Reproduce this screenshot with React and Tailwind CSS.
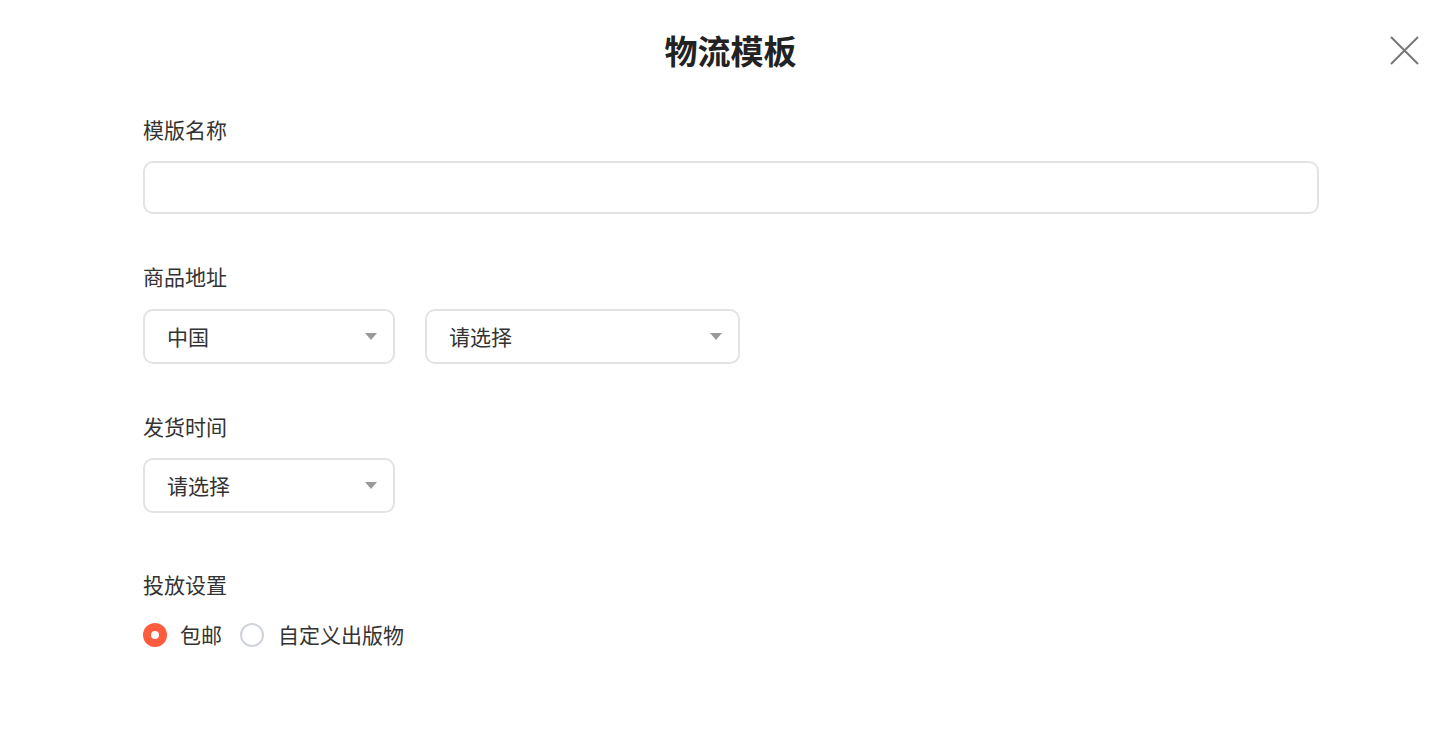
import React, { useState } from 'react';

const font = { fontFamily: '"Noto Sans CJK SC", "Noto Sans", sans-serif' };

const Caret = () => (
  <svg width="12" height="7" viewBox="0 0 12 7" className="shrink-0">
    <path d="M0 0 L12 0 L6 7 Z" fill="#9a9a9a" />
  </svg>
);

const Select = ({ value, width }) => (
  <div
    className={`${width} h-[55px] border-2 border-[#e3e3e3] rounded-[10px] flex items-center justify-between pl-[22px] pr-[16px] bg-white`}
  >
    <span className="text-[21px] text-[#333]">{value}</span>
    <Caret />
  </div>
);

const Label = ({ children }) => (
  <div className="text-[21px] leading-[28px] text-[#333]">{children}</div>
);

export default function App() {
  const [ship, setShip] = useState('free');

  return (
    <div className="w-full min-h-screen bg-white relative" style={font}>
      {/* Close */}
      <button className="absolute right-[36px] top-[36px] w-[29px] h-[29px]">
        <svg width="29" height="29" viewBox="0 0 29 29">
          <path d="M1 1 L28 28 M28 1 L1 28" stroke="#777" strokeWidth="2" />
        </svg>
      </button>

      <div className="pt-[26px] text-center">
        <h1 className="text-[33px] leading-[48px] font-bold text-[#222] pl-[6px]">物流模板</h1>
      </div>

      <div className="pl-[143px] w-[1319px] pt-[41px]">
        <Label>模版名称</Label>
        <div className="mt-[18px] h-[53px] w-[1176px] border-2 border-[#e3e3e3] rounded-[10px]" />

        <div className="mt-[48px]">
          <Label>商品地址</Label>
          <div className="mt-[19px] flex gap-[30px]">
            <Select value="中国" width="w-[252px]" />
            <Select value="请选择" width="w-[315px]" />
          </div>
        </div>

        <div className="mt-[48px]">
          <Label>发货时间</Label>
          <div className="mt-[18px] flex">
            <Select value="请选择" width="w-[252px]" />
          </div>
        </div>

        <div className="mt-[57px]">
          <Label>投放设置</Label>
          <div className="mt-[23px] flex items-center h-[28px]">
            <button className="flex items-center" onClick={() => setShip('free')}>
              {ship === 'free' ? (
                <span className="w-[24px] h-[24px] rounded-full bg-[#ff5b3f] flex items-center justify-center">
                  <span className="w-[8px] h-[8px] rounded-full bg-white" />
                </span>
              ) : (
                <span className="w-[24px] h-[24px] rounded-full border-2 border-[#cfd3da]" />
              )}
              <span className="ml-[13px] text-[21px] text-[#333]">包邮</span>
            </button>
            <button className="flex items-center ml-[18px]" onClick={() => setShip('custom')}>
              {ship === 'custom' ? (
                <span className="w-[24px] h-[24px] rounded-full bg-[#ff5b3f] flex items-center justify-center">
                  <span className="w-[8px] h-[8px] rounded-full bg-white" />
                </span>
              ) : (
                <span className="w-[24px] h-[24px] rounded-full border-2 border-[#cfd3da]" />
              )}
              <span className="ml-[14px] text-[21px] text-[#333]">自定义出版物</span>
            </button>
          </div>
        </div>
      </div>
    </div>
  );
}
